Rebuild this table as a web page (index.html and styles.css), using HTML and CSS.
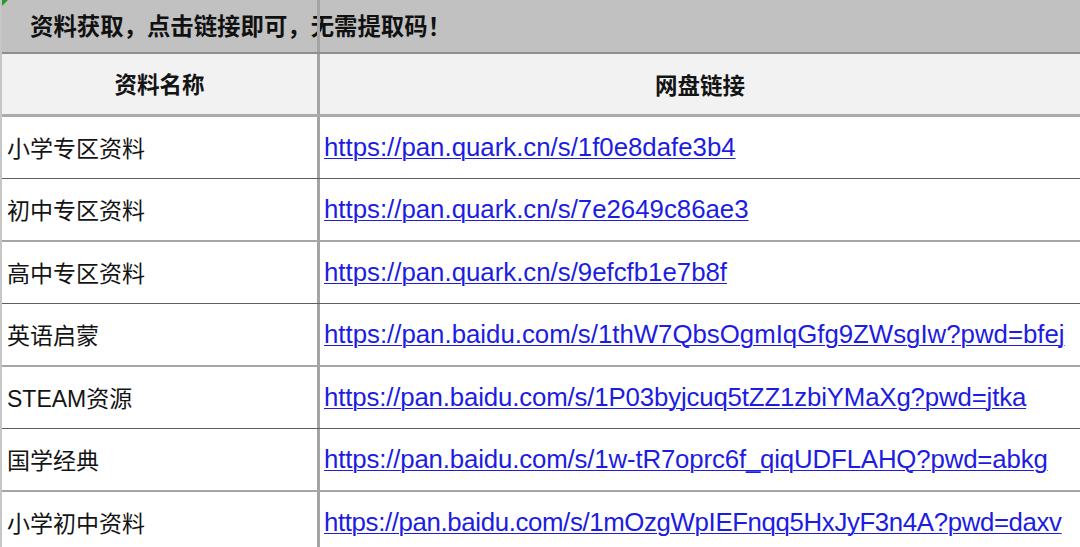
FILE: index.html
```html
<!DOCTYPE html>
<html lang="zh-CN">
<head>
<meta charset="utf-8">
<title>资料获取</title>
<link rel="stylesheet" href="styles.css">
</head>
<body>
<div class="page">
  <div class="title">
    <span class="corner"></span>
    <span class="title-text">资料获取，点击链接即可，无需提取码！</span>
  </div>
  <div class="table">
    <div class="row head">
      <div class="cell name">资料名称</div>
      <div class="cell link">网盘链接</div>
    </div>
    <div class="row dark">
      <div class="cell name">小学专区资料</div>
      <div class="cell link"><a href="#">https://pan.quark.cn/s/1f0e8dafe3b4</a></div>
    </div>
    <div class="row light">
      <div class="cell name">初中专区资料</div>
      <div class="cell link"><a href="#">https://pan.quark.cn/s/7e2649c86ae3</a></div>
    </div>
    <div class="row dark">
      <div class="cell name">高中专区资料</div>
      <div class="cell link"><a href="#">https://pan.quark.cn/s/9efcfb1e7b8f</a></div>
    </div>
    <div class="row light">
      <div class="cell name">英语启蒙</div>
      <div class="cell link"><a href="#">https://pan.baidu.com/s/1thW7QbsOgmIqGfg9ZWsgIw?pwd=bfej</a></div>
    </div>
    <div class="row dark">
      <div class="cell name">STEAM资源</div>
      <div class="cell link"><a class="fit-a" href="#">https://pan.baidu.com/s/1P03byjcuq5tZZ1zbiYMaXg?pwd=jtka</a></div>
    </div>
    <div class="row light">
      <div class="cell name">国学经典</div>
      <div class="cell link"><a class="fit-a" href="#">https://pan.baidu.com/s/1w-tR7oprc6f_qiqUDFLAHQ?pwd=abkg</a></div>
    </div>
    <div class="row last">
      <div class="cell name">小学初中资料</div>
      <div class="cell link"><a class="fit-b" href="#">https://pan.baidu.com/s/1mOzgWpIEFnqq5HxJyF3n4A?pwd=daxv</a></div>
    </div>
  </div>
</div>
</body>
</html>
```

FILE: styles.css
```css
html, body {
  margin: 0;
  padding: 0;
  background: #ffffff;
}
.page {
  width: 1080px;
  height: 547px;
  overflow: hidden;
  box-sizing: border-box;
  border-left: 2px solid #c6c6c6;
  font-family: "Liberation Sans", "Noto Sans CJK SC", sans-serif;
  color: #141414;
}
.title {
  position: relative;
  height: 52px;
  background: #c1c1c1;
  border-bottom: 2px solid #8e8e8e;
  display: flex;
  align-items: center;
  padding-left: 28px;
}
.title::after {
  content: "";
  position: absolute;
  left: 315px;
  top: 0;
  width: 3px;
  height: 100%;
  background: #a4a4a4;
}
.corner {
  position: absolute;
  left: -2px;
  top: 0;
  width: 0;
  height: 0;
  border-top: 8px solid #2a9a2a;
  border-right: 8px solid transparent;
}
.title-text {
  font-family: "Noto Sans CJK SC", sans-serif;
  font-weight: 700;
  font-size: 23.4px;
  color: #111;
  padding-bottom: 2px;
}
.table {
  display: flex;
  flex-direction: column;
}
.row {
  display: grid;
  grid-template-columns: 318px 1fr;
  height: 62px;
  box-sizing: border-box;
}
.row.head {
  height: 63px;
  background: #f2f2f2;
  border-bottom: 3px solid #ababab;
}
.row.dark {
  border-bottom: 1px solid #5e5e5e;
}
.row.light {
  border-bottom: 2px solid #a6a6a6;
  height: 63px;
}
.row.last {
  height: 62px;
}
.cell {
  display: flex;
  align-items: center;
}
.cell.name {
  border-right: 3px solid #a4a4a4;
  padding-left: 5px;
  font-family: "Liberation Sans", "Noto Sans CJK SC", sans-serif;
  font-size: 23px;
  padding-bottom: 2px;
}
.cell.link {
  padding-left: 4px;
  font-size: 25.8px;
  white-space: nowrap;
  padding-bottom: 1px;
}
.head .cell {
  justify-content: center;
  font-family: "Noto Sans CJK SC", sans-serif;
  font-weight: 700;
  font-size: 22.5px;
  padding-left: 0;
}
.cell.link a {
  color: #1c1ce2;
  text-decoration: underline;
  text-underline-offset: 2px;
  text-decoration-thickness: 1px;
}
.cell.link a.fit-a {
  letter-spacing: -0.15px;
}
.cell.link a.fit-b {
  letter-spacing: -0.36px;
}
```
